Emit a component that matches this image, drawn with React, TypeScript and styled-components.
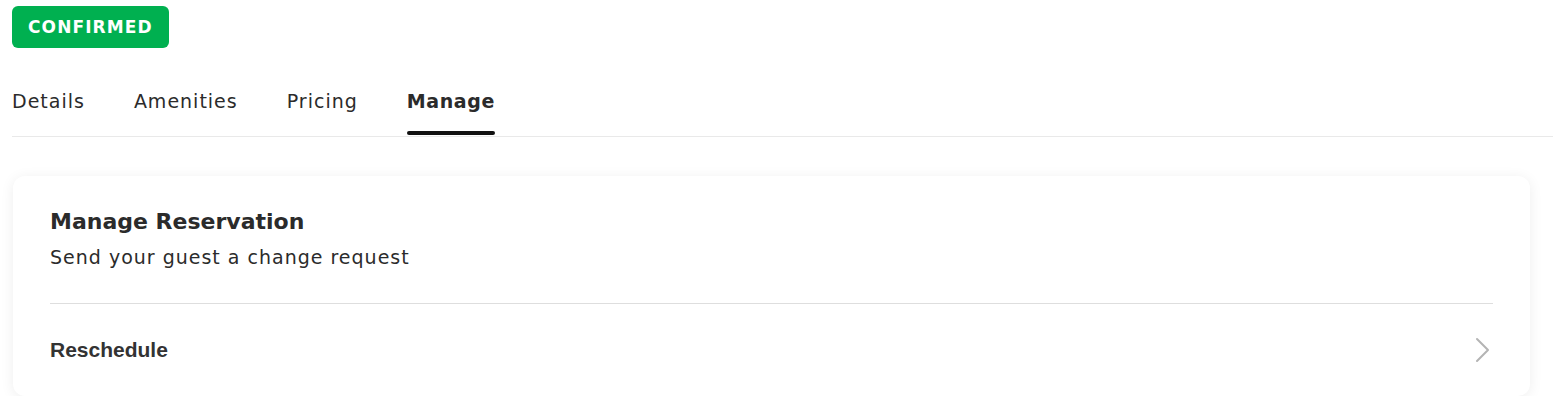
import React, { useState } from "react"
import styled, { createGlobalStyle } from "styled-components"

const GlobalStyle = createGlobalStyle`
  body {
    margin: 0;
    background: #ffffff;
    font-family: "DejaVu Sans", "Open Sans", sans-serif;
    color: #2b2b2b;
  }
`

const Page = styled.div`
  padding: 6px 0 0 12px;
`

const Badge = styled.div`
  display: inline-flex;
  align-items: center;
  height: 42px;
  padding: 0 16px;
  border-radius: 6px;
  background-color: #00b050;
  color: #ffffff;
  font-weight: 700;
  font-size: 17px;
  letter-spacing: 1.1px;
`

const TabBar = styled.div`
  display: flex;
  gap: 49px;
  margin-top: 39px;
  border-bottom: 1px solid #e9e9e9;
`

const Tab = styled.button<{ $active?: boolean }>`
  position: relative;
  background: none;
  border: none;
  padding: 0 0 21px;
  font-family: inherit;
  font-size: 19px;
  line-height: 28px;
  letter-spacing: ${(p) => (p.$active ? "0.6px" : "1px")};
  font-weight: ${(p) => (p.$active ? 700 : 400)};
  color: #2b2b2b;
  cursor: pointer;
  &::after {
    content: "";
    display: ${(p) => (p.$active ? "block" : "none")};
    position: absolute;
    left: 0;
    right: 0;
    bottom: 1px;
    height: 4px;
    border-radius: 2px;
    background: #111111;
  }
`

const Card = styled.section`
  margin: 39px 23px 0 1px;
  padding: 32px 37px 0;
  background: #ffffff;
  border-radius: 12px;
  box-shadow: 0 2px 14px rgba(0, 0, 0, 0.07);
`

const Title = styled.h2`
  margin: 0;
  font-size: 22px;
  line-height: 28px;
  font-weight: 700;
  color: #2b2b2b;
`

const Subtitle = styled.p`
  margin: 8px 0 0;
  font-size: 19px;
  line-height: 26px;
  letter-spacing: 1px;
  color: #2b2b2b;
`

const Divider = styled.hr`
  margin: 33px 0 0;
  border: none;
  border-top: 1px solid #dedede;
`

const Row = styled.button`
  display: flex;
  align-items: center;
  justify-content: space-between;
  width: 100%;
  height: 92px;
  padding: 0 2px 0 0;
  background: none;
  border: none;
  cursor: pointer;
  font-family: "Liberation Sans", Arial, sans-serif;
  font-size: 21px;
  font-weight: 700;
  color: #333333;
`

const Chevron = () => (
  <svg width="16" height="26" viewBox="0 0 16 26" fill="none">
    <path d="M2 2l11 11L2 24" stroke="#b4b4b4" strokeWidth="2" strokeLinecap="round" strokeLinejoin="round" />
  </svg>
)

const tabs = ["Details", "Amenities", "Pricing", "Manage"]

const App = () => {
  const [active, setActive] = useState("Manage")
  return (
    <Page>
      <GlobalStyle />
      <Badge>CONFIRMED</Badge>
      <TabBar>
        {tabs.map((t) => (
          <Tab key={t} $active={t === active} onClick={() => setActive(t)}>
            {t}
          </Tab>
        ))}
      </TabBar>
      <Card>
        <Title>Manage Reservation</Title>
        <Subtitle>Send your guest a change request</Subtitle>
        <Divider />
        <Row>
          Reschedule
          <Chevron />
        </Row>
      </Card>
    </Page>
  )
}

export default App
